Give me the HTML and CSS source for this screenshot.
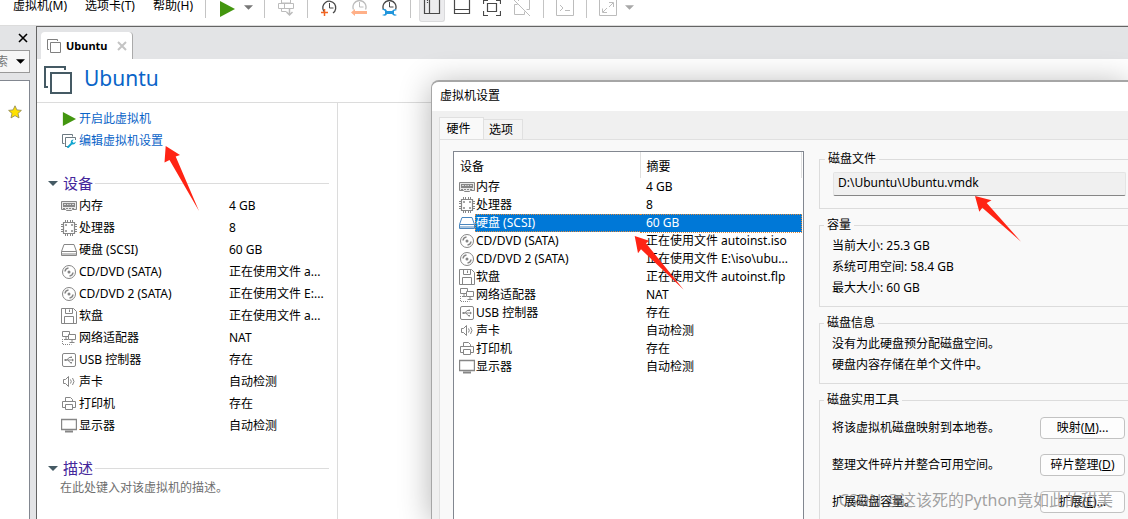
FILE: index.html
```html
<!DOCTYPE html>
<html lang="zh-CN">
<head>
<meta charset="utf-8">
<title>Ubuntu</title>
<link rel="stylesheet" href="styles.css">
</head>
<body>
<svg class="defs" aria-hidden="true">
  <symbol id="i-memory" viewBox="0 0 16 16"><path d="M.5 3.500h15v8h-4l-1 1h-5l-1-1h-4z" fill="#e8e8e8" stroke="currentColor"/><path d="M2 5h12v4H2z" fill="currentColor"/><path d="M3 6.500h2M6 6.500h1.500M8.500 6.500H10M11 6.500h2" stroke="#d8d8d8"/><path d="M2 10.500h12" stroke="currentColor" stroke-dasharray="2 1"/></symbol>
  <symbol id="i-cpu" viewBox="0 0 16 16"><path d="M2.500 2.500h11v11h-11z" fill="none" stroke="currentColor" stroke-width="1.200"/><path d="M4.500 0v2M6.500 0v2M9.500 0v2M11.500 0v2M4.500 14v2M6.500 14v2M9.500 14v2M11.500 14v2M0 4.500h2M0 6.500h2M0 9.500h2M0 11.500h2M14 4.500h2M14 6.500h2M14 9.500h2M14 11.500h2" stroke="currentColor"/><path d="M4 4h2v2H4zM10 4h2v2h-2zM4 10h2v2H4zM10 10h2v2h-2z" fill="currentColor" opacity=".75"/></symbol>
  <symbol id="i-disk" viewBox="0 0 16 16"><path d="M3 2.500h10l2.500 7v4H.5v-4zM.5 9.500h15" fill="none" stroke="currentColor"/><path d="M1 11h14v2H1z" fill="currentColor" opacity=".5"/></symbol>
  <symbol id="i-cd" viewBox="0 0 16 16"><circle cx="8" cy="8" r="6.500" fill="none" stroke="currentColor"/><circle cx="8" cy="8" r="1.500" fill="currentColor"/><path d="M4 7.500A4 4 0 0 1 7.500 4M8.500 12A4 4 0 0 0 12 8.500" fill="none" stroke="currentColor" stroke-width="1.500"/></symbol>
  <symbol id="i-floppy" viewBox="0 0 16 16"><path d="M.5.5h12l3 3v12H.5zM4.500.5v5h7v-5M8.500 1.500v2.500M3.500 15.500v-7h9v7" fill="none" stroke="currentColor"/></symbol>
  <symbol id="i-net" viewBox="0 0 16 16"><path d="M1.500 1.500h7v5h-7zM3 9.500h4M5 6.500v3" fill="none" stroke="currentColor"/><path d="M7.500 4.500h7v5h-7z" fill="#fff" stroke="currentColor"/><path d="M11 9.500v3M8.500 12.500h5" stroke="currentColor"/><path d="M1.500 9v5.500h9" fill="none" stroke="currentColor" stroke-dasharray="1 1"/></symbol>
  <symbol id="i-usb" viewBox="0 0 16 16"><rect x="1.500" y="1.500" width="13" height="13" rx="1.500" fill="none" stroke="currentColor"/><path d="M4 8h8M6 8l2-2.500h2M7 8l2 2.500h1.500" fill="none" stroke="currentColor"/><path d="M3.500 7h2v2h-2zM11 6.500L13 8l-2 1.500zM9.500 4.500h1.500v1.500H9.500zM9.500 10h1.500v1.500H9.500z" fill="currentColor"/></symbol>
  <symbol id="i-sound" viewBox="0 0 16 16"><path d="M2.500 5.500h2l3-3v10l-3-3h-2z" fill="none" stroke="currentColor"/><path d="M9.500 5.500q1.500 2 0 4M11.500 4q3 3.500 0 7" fill="none" stroke="currentColor"/></symbol>
  <symbol id="i-print" viewBox="0 0 16 16"><path d="M4.500 5.500v-4h5l2 2v2M4.500 11.500h-3v-6h13v6h-3M4.500 8.500h7v5h-7z" fill="none" stroke="currentColor"/></symbol>
  <symbol id="i-display" viewBox="0 0 16 16"><path d="M.5 1.500h15v10H.5z" fill="none" stroke="currentColor" stroke-width="1.400"/><path d="M4 13.500h8" stroke="currentColor" stroke-width="2"/></symbol>
  <symbol id="i-play" viewBox="0 0 16 16"><path d="M1 0l15 8L1 16z" fill="#43960f"/></symbol>
  <symbol id="i-down" viewBox="0 0 10 5"><path d="M0 0h10L5 5z" fill="currentColor"/></symbol>
  <symbol id="i-stack" viewBox="0 0 28 28"><path d="M21 4V1H1v20h3" fill="none" stroke="currentColor" stroke-width="2"/><path d="M7 7h20v20H7z" fill="#fff" stroke="currentColor" stroke-width="2"/></symbol>
  <symbol id="i-clock" viewBox="0 0 18 18"><path d="M4 12.500a6.500 6.500 0 1 1 9 1.500" fill="none" stroke="currentColor" stroke-width="1.300"/><path d="M9.500 4v5h4" fill="none" stroke="currentColor"/></symbol>
  <symbol id="i-clock-top" viewBox="0 0 18 18"><path d="M3.500 10.500a6.500 6.500 0 1 1 12 0" fill="none" stroke="currentColor" stroke-width="1.300"/><path d="M9.500 3v5h4" fill="none" stroke="currentColor"/></symbol>
</svg>

<header class="toolbar">
  <nav class="menus">
    <button>虚拟机(M)</button><button>选项卡(T)</button><button>帮助(H)</button>
  </nav>
  <div class="group">
    <button class="tool" aria-label="开启"><svg width="16" height="16"><use href="#i-play"/></svg></button>
    <button class="drop" aria-label="电源选项"><svg width="9" height="5"><use href="#i-down"/></svg></button>
  </div>
  <div class="group">
    <button class="tool pale" aria-label="发送"><svg width="18" height="18" viewBox="0 0 18 18" fill="none" stroke="currentColor"><path d="M4.500 0v4h9V0M1.500 4.500h15v5h-15zM7.500 4.500v5M4.500 9.500v3h5M12.500 9.500v6" /><path d="M12.500 10v6M9.500 13l3 3 3-3" stroke-width="1.500"/></svg></button>
  </div>
  <div class="group">
    <button class="tool" aria-label="拍摄快照"><svg width="18" height="18"><use href="#i-clock"/><path d="M1 13.500h7M4.500 10v7" stroke="#f26522" stroke-width="1.500"/></svg></button>
    <button class="tool pale" aria-label="恢复快照"><svg width="18" height="18"><use href="#i-clock-top"/><path d="M1 13.500l4-3.500v2h12v3H5v2z" fill="#ffb088"/></svg></button>
    <button class="tool" aria-label="管理快照"><svg width="18" height="18"><use href="#i-clock-top"/><path d="M2 10q4-1 5 2h5q2-3 5-1l-3 1v3l3 1q-3 2-5-1H7q-1 3-5 1l3-1v-3z" fill="#2196dc"/></svg></button>
  </div>
  <div class="group">
    <button class="tool pressed" aria-label="库"><svg width="18" height="18" fill="none" stroke="currentColor"><path d="M1.500.5h15v15h-15zM6.500.5v15M4.500 2v1M4.500 4v1" stroke-width="1.200"/></svg></button>
    <button class="tool" aria-label="缩略图"><svg width="18" height="18" fill="none" stroke="currentColor"><path d="M1.500.5h15v14h-15zM1.500 10.500h15" stroke-width="1.200"/></svg></button>
    <button class="tool" aria-label="全屏"><svg width="18" height="18" fill="none" stroke="currentColor"><path d="M.5 5V1.500H5M13 1.500h4.500V5M.5 12v4.500H5M13 16.500h4.500V12M4.500 4.500h9v8h-9z" stroke-width="1.200"/></svg></button>
    <button class="tool pale" aria-label="Unity"><svg width="18" height="18" fill="none" stroke="currentColor"><path d="M5.500 2V.500h11v10h-3M4.500 5.500h-3v10h10v-3M1 1l16 16"/></svg></button>
  </div>
  <div class="group">
    <button class="tool pale" aria-label="控制台"><svg width="18" height="18" fill="none" stroke="currentColor"><path d="M.5.500h17v16H.500zM4 6l3 3-3 3M9 11.500h5"/></svg></button>
  </div>
  <div class="group">
    <button class="tool pale" aria-label="自由拉伸"><svg width="18" height="18" fill="none" stroke="currentColor"><path d="M.5.500h17v16H.500zM10 3.500h4.500V8M14 4l-4 4M3.500 9.500v4H8M4 13l4-4"/></svg></button>
    <button class="drop pale" aria-label="拉伸选项"><svg width="9" height="5"><use href="#i-down"/></svg></button>
  </div>
</header>

<div class="workspace">
  <aside class="library">
    <button class="close" aria-label="关闭"><svg width="10" height="10"><path d="M1 1l8 8M9 1L1 9" stroke="#000" stroke-width="1.600"/></svg></button>
    <button class="search"><span>索</span><svg width="9" height="5"><use href="#i-down"/></svg></button>
    <div class="tree"><svg width="14" height="14" viewBox="0 0 14 14"><path d="M7 .8l1.900 4.100 4.500.5-3.400 3 1 4.500-4-2.300-4 2.300 1-4.500-3.400-3 4.500-.5z" fill="#ffe100" stroke="#8d8550" stroke-width=".8"/></svg></div>
  </aside>

  <main class="main">
    <div class="tabbar">
      <div class="tab"><svg width="14" height="14" class="grey"><use href="#i-stack"/></svg><b>Ubuntu</b><button aria-label="关闭标签"><svg width="10" height="10"><path d="M1 1l8 8M9 1L1 9" stroke="#c4c4c4" stroke-width="2"/></svg></button></div>
    </div>
    <div class="heading"><svg width="28" height="28"><use href="#i-stack"/></svg><h1>Ubuntu</h1></div>
    <div class="summary">
      <div class="actions">
        <a href="#"><svg width="14" height="14"><use href="#i-play"/></svg>开启此虚拟机</a>
        <a href="#"><svg width="14" height="14" viewBox="0 0 14 14"><path d="M10.500 2.500v-2H.500v9h2M3.500 13V3.500h10V6M3.500 12.500H6" fill="none" stroke="#6d7a82"/><path d="M13.800 7.500l-2 1.500-1.500-1.500 1.500-2q-3.500 0-3 3.500l-4 4L6 14.500l4-4q3.500.5 3.800-3z" fill="#11a5cf"/></svg>编辑虚拟机设置</a>
      </div>
      <section>
        <h2><svg width="10" height="5"><use href="#i-down"/></svg>设备</h2>
        <table class="devices">
          <tr><td><svg><use href="#i-memory"/></svg>内存</td><td>4 GB</td></tr>
          <tr><td><svg><use href="#i-cpu"/></svg>处理器</td><td>8</td></tr>
          <tr><td><svg><use href="#i-disk"/></svg>硬盘 (SCSI)</td><td>60 GB</td></tr>
          <tr><td><svg><use href="#i-cd"/></svg>CD/DVD (SATA)</td><td>正在使用文件 a...</td></tr>
          <tr><td><svg><use href="#i-cd"/></svg>CD/DVD 2 (SATA)</td><td>正在使用文件 E:...</td></tr>
          <tr><td><svg><use href="#i-floppy"/></svg>软盘</td><td>正在使用文件 a...</td></tr>
          <tr><td><svg><use href="#i-net"/></svg>网络适配器</td><td>NAT</td></tr>
          <tr><td><svg><use href="#i-usb"/></svg>USB 控制器</td><td>存在</td></tr>
          <tr><td><svg><use href="#i-sound"/></svg>声卡</td><td>自动检测</td></tr>
          <tr><td><svg><use href="#i-print"/></svg>打印机</td><td>存在</td></tr>
          <tr><td><svg><use href="#i-display"/></svg>显示器</td><td>自动检测</td></tr>
        </table>
      </section>
      <section>
        <h2><svg width="10" height="5"><use href="#i-down"/></svg>描述</h2>
        <p>在此处键入对该虚拟机的描述。</p>
      </section>
    </div>
  </main>
</div>

<div class="dialog" role="dialog" aria-label="虚拟机设置">
  <div class="title">虚拟机设置</div>
  <div class="dialog-tabs"><button class="on">硬件</button><button>选项</button></div>
  <div class="panel">
    <div class="list">
      <table>
        <thead><tr><th>设备</th><th>摘要</th></tr></thead>
        <tbody>
          <tr><td><svg><use href="#i-memory"/></svg><span>内存</span></td><td>4 GB</td></tr>
          <tr><td><svg><use href="#i-cpu"/></svg><span>处理器</span></td><td>8</td></tr>
          <tr class="selected"><td><svg><use href="#i-disk"/></svg><span>硬盘 (SCSI)</span></td><td>60 GB</td></tr>
          <tr><td><svg><use href="#i-cd"/></svg><span>CD/DVD (SATA)</span></td><td>正在使用文件 autoinst.iso</td></tr>
          <tr><td><svg><use href="#i-cd"/></svg><span>CD/DVD 2 (SATA)</span></td><td>正在使用文件 E:\iso\ubu...</td></tr>
          <tr><td><svg><use href="#i-floppy"/></svg><span>软盘</span></td><td>正在使用文件 autoinst.flp</td></tr>
          <tr><td><svg><use href="#i-net"/></svg><span>网络适配器</span></td><td>NAT</td></tr>
          <tr><td><svg><use href="#i-usb"/></svg><span>USB 控制器</span></td><td>存在</td></tr>
          <tr><td><svg><use href="#i-sound"/></svg><span>声卡</span></td><td>自动检测</td></tr>
          <tr><td><svg><use href="#i-print"/></svg><span>打印机</span></td><td>存在</td></tr>
          <tr><td><svg><use href="#i-display"/></svg><span>显示器</span></td><td>自动检测</td></tr>
        </tbody>
      </table>
    </div>
    <div class="details">
      <fieldset class="file"><legend>磁盘文件</legend><input type="text" aria-label="磁盘文件" value="D:\Ubuntu\Ubuntu.vmdk" readonly></fieldset>
      <fieldset><legend>容量</legend><p>当前大小: 25.3 GB</p><p>系统可用空间: 58.4 GB</p><p>最大大小: 60 GB</p></fieldset>
      <fieldset><legend>磁盘信息</legend><p>没有为此硬盘预分配磁盘空间。</p><p>硬盘内容存储在单个文件中。</p></fieldset>
      <fieldset class="tools"><legend>磁盘实用工具</legend>
        <div><span>将该虚拟机磁盘映射到本地卷。</span><button>映射(<u>M</u>)...</button></div>
        <div><span>整理文件碎片并整合可用空间。</span><button>碎片整理(<u>D</u>)</button></div>
        <div><span>扩展磁盘容量。</span><button>扩展(<u>E</u>)...</button></div>
      </fieldset>
    </div>
  </div>
</div>

<svg class="arrow arrow-edit" width="36" height="66" viewBox="0 0 36 66"><path d="M1.700 1L16 10l-4.300 1.500L35 66 5.500 15 .5 17.500z"/></svg>
<svg class="arrow arrow-disk" width="50" height="55" viewBox="0 0 50 55"><path d="M.7 1L15 5.700l-3 2.600L49.700 54.700 7 14.300l-3 4z"/></svg>
<svg class="arrow arrow-file" width="48" height="48" viewBox="0 0 48 48"><path d="M1 1l16.500 4.300-4.800 2.700L47 46.700 8.300 12.700l-3 4z"/></svg>
<div class="watermark">CSDN @这该死的Python竟如此的甜美</div>
</body>
</html>
```

FILE: styles.css
```css
* { box-sizing: border-box; }
body {
  margin: 0;
  height: 100vh;
  display: flex;
  flex-direction: column;
  position: relative;
  overflow: hidden;
  background: #fff;
  color: #000;
  font: 12px/18px "Noto Sans", "Noto Sans CJK SC", sans-serif;
}
button {
  border: 0;
  padding: 0;
  background: none;
  font: inherit;
  color: inherit;
}
svg { display: block; flex: none; }
h1, h2, p { margin: 0; font-weight: normal; }
table { border-collapse: collapse; table-layout: fixed; width: 100%; }
td, th { padding: 0; text-align: left; font-weight: normal; white-space: nowrap; }
.defs { position: absolute; width: 0; height: 0; }
.pale { color: #bcbcbc; }
.grey { color: #808080; }

.toolbar {
  display: flex;
  height: 26px;
  flex: none;
  border-bottom: 1px solid #dcdcdc;
  color: #484848;
}
.menus {
  display: flex;
  gap: 18px;
  align-items: flex-start;
  padding-left: 13px;
  width: 205px;
  line-height: 12px;
  white-space: nowrap;
  color: #000;
}
.group {
  display: flex;
  gap: 4px;
  align-items: flex-end;
  height: 18px;
  padding: 0 8px;
  border-left: 1px solid #c4c4c4;
}
.tool {
  display: flex;
  width: 26px;
  height: 22px;
  margin-bottom: -4px;
  padding-bottom: 5px;
  align-items: flex-end;
  justify-content: center;
}
.pressed {
  background: #ececee;
  border: 1px solid #dadadc;
  border-top: 0;
  border-radius: 0 0 3px 3px;
}
.drop { width: 12px; height: 22px; color: #777; }
.drop.pale { color: #a8a8a8; }

.workspace { display: flex; flex: 1; min-height: 0; }
.library {
  width: 36px;
  flex: none;
  display: flex;
  flex-direction: column;
  background: #e3e4e6;
}
.close { align-self: flex-end; margin: 7px 8px 7px 0; }
.search {
  display: flex;
  align-items: center;
  justify-content: space-between;
  width: 30px;
  height: 23px;
  padding-right: 4px;
  background: #f6f6f6;
  border: 1px solid #999;
  border-left: 0;
}
.search span { color: #777; margin-left: -4px; }
.tree {
  flex: 1;
  width: 30px;
  margin-top: 7px;
  padding: 24px 8px;
  background: #fff;
  border: solid #828790;
  border-width: 1px 1px 0 0;
}
.main {
  flex: 1;
  display: flex;
  flex-direction: column;
  border: solid #646464;
  border-width: 1px 0 0 1px;
}
.tabbar { display: flex; height: 32px; flex: none; padding: 5px 4px 0; background: #e3e4e6; }
.tab {
  display: flex;
  align-items: center;
  gap: 5px;
  padding: 0 5px 0 6px;
  background: #fff;
  border-right: 1px solid #aaa;
  border-radius: 4px 4px 0 0;
  font-size: 11px;
}
.tab button { margin-left: 4px; }
.heading {
  display: flex;
  align-items: center;
  gap: 12px;
  height: 44px;
  flex: none;
  padding: 0 0 2px 7px;
  border-bottom: 1px solid #dcdcdc;
  color: #455a64;
}
.heading h1 { font-size: 21px; line-height: 28px; padding-bottom: 4px; color: #0a64c8; }
.summary {
  flex: 1;
  width: 301px;
  padding: 5px 8px 0 11px;
  border-right: 1px solid #dcdcdc;
}
.actions { padding: 0 0 20px 14px; }
.actions a {
  display: flex;
  align-items: center;
  gap: 3px;
  height: 22px;
  color: #0a64c8;
  text-decoration: none;
}
section { margin-bottom: 21px; }
h2 {
  display: flex;
  align-items: center;
  gap: 5px;
  height: 22px;
  font-size: 15px;
  color: #44279b;
}
h2 svg { color: #455a64; }
h2::after { content: ""; flex: 1; height: 1px; background: #dcdcdc; margin-left: -3px; }
section p { padding-left: 12px; color: #6e6e6e; }
td svg { width: 16px; height: 16px; color: #868686; }
.devices { margin-left: 13px; width: 268px; }
.devices tr { height: 22px; }
.devices td { padding-top: 1px; }
.devices td:first-child { display: flex; align-items: center; gap: 2px; height: 22px; }
.devices td:last-child { width: 100px; }

.dialog {
  position: absolute;
  left: 431px;
  top: 80px;
  right: 0;
  bottom: 0;
  display: flex;
  flex-direction: column;
  background: #f0f0f0;
  border: solid #a6a6a6;
  border-width: 2px 0 0 1px;
  border-radius: 8px 0 0 0;
  box-shadow: 0 4px 32px rgba(0, 0, 0, .3);
  overflow: hidden;
}
.title { height: 29px; flex: none; padding: 5px 8px; background: #fff; }
.dialog-tabs { display: flex; align-items: flex-end; padding: 6px 7px 0; }
.dialog-tabs button {
  width: 39px;
  height: 20px;
  padding-right: 4px;
  border: 1px solid #e0e0e0;
  border-width: 1px 1px 0 0;
  background: #f3f3f3;
}
.dialog-tabs .on { width: 45px; height: 22px; border-left-width: 1px; background: #f9f9f9; padding-right: 6px; }
.panel {
  flex: 1;
  display: flex;
  gap: 15px;
  min-height: 0;
  margin-left: 7px;
  padding: 11px 0 0 13px;
  border: solid #e0e0e0;
  border-width: 1px 0 0 1px;
  background: #f9f9f9;
}
.list { width: 351px; flex: none; border: 1px solid #828790; border-bottom: 0; background: #fff; padding-right: 1px; }
.list thead tr { height: 26px; }
.list th { padding: 4px 0 0 6px; border-right: 1px solid #e0e0e0; }
.list th:first-child { width: 186px; }
.list tbody tr { height: 18px; }
.list td { line-height: 16px; padding-left: 6px; }
.list td:first-child { display: flex; align-items: center; height: 18px; padding-left: 5px; }
.list td span { flex: 1; height: 18px; border: 1px solid transparent; }
.list .selected td:last-child, .list .selected span { background: #0078d7; color: #fff; border: 1px dotted #e08a3c; border-width: 1px 0 1px 1px; }
.list .selected td:last-child { border-width: 1px 1px 1px 0; }
.list .selected svg { color: #4a86be; }

.details { flex: 1; display: flex; flex-direction: column; gap: 8px; min-width: 0; }
fieldset {
  margin: 0;
  min-width: 0;
  padding: 2px 0 8px 12px;
  border: 1px solid #dcdcdc;
  border-right: 0;
}
legend { padding: 0 3px; margin-left: -8px; line-height: 16px; }
fieldset p { line-height: 21px; }
.file { padding: 5px 2px 12px 13px; }
.file input {
  display: block;
  width: 100%;
  height: 24px;
  padding: 0 4px 3px;
  border: 1px solid #e4e4e4;
  border-bottom-color: #868686;
  border-radius: 2px;
  background: #f0f0f0;
  font: inherit;
}
.tools { padding: 9px 3px 8px 12px; }
.tools div { display: flex; justify-content: space-between; align-items: center; }
.tools div + div { margin-top: 15px; }
.tools button {
  width: 85px;
  height: 22px;
  line-height: 18px;
  border: 1px solid #c2c2c2;
  border-radius: 4px;
  background: #fdfdfd;
}
.arrow { position: absolute; fill: #ff2414; }
.arrow-edit { left: 164px; top: 145px; }
.arrow-disk { left: 634px; top: 235px; }
.arrow-file { left: 974px; top: 195px; }
.watermark {
  position: absolute;
  right: 15px;
  bottom: 8px;
  font-size: 16px;
  line-height: 22px;
  color: rgba(110, 110, 110, .65);
  white-space: nowrap;
}
```
